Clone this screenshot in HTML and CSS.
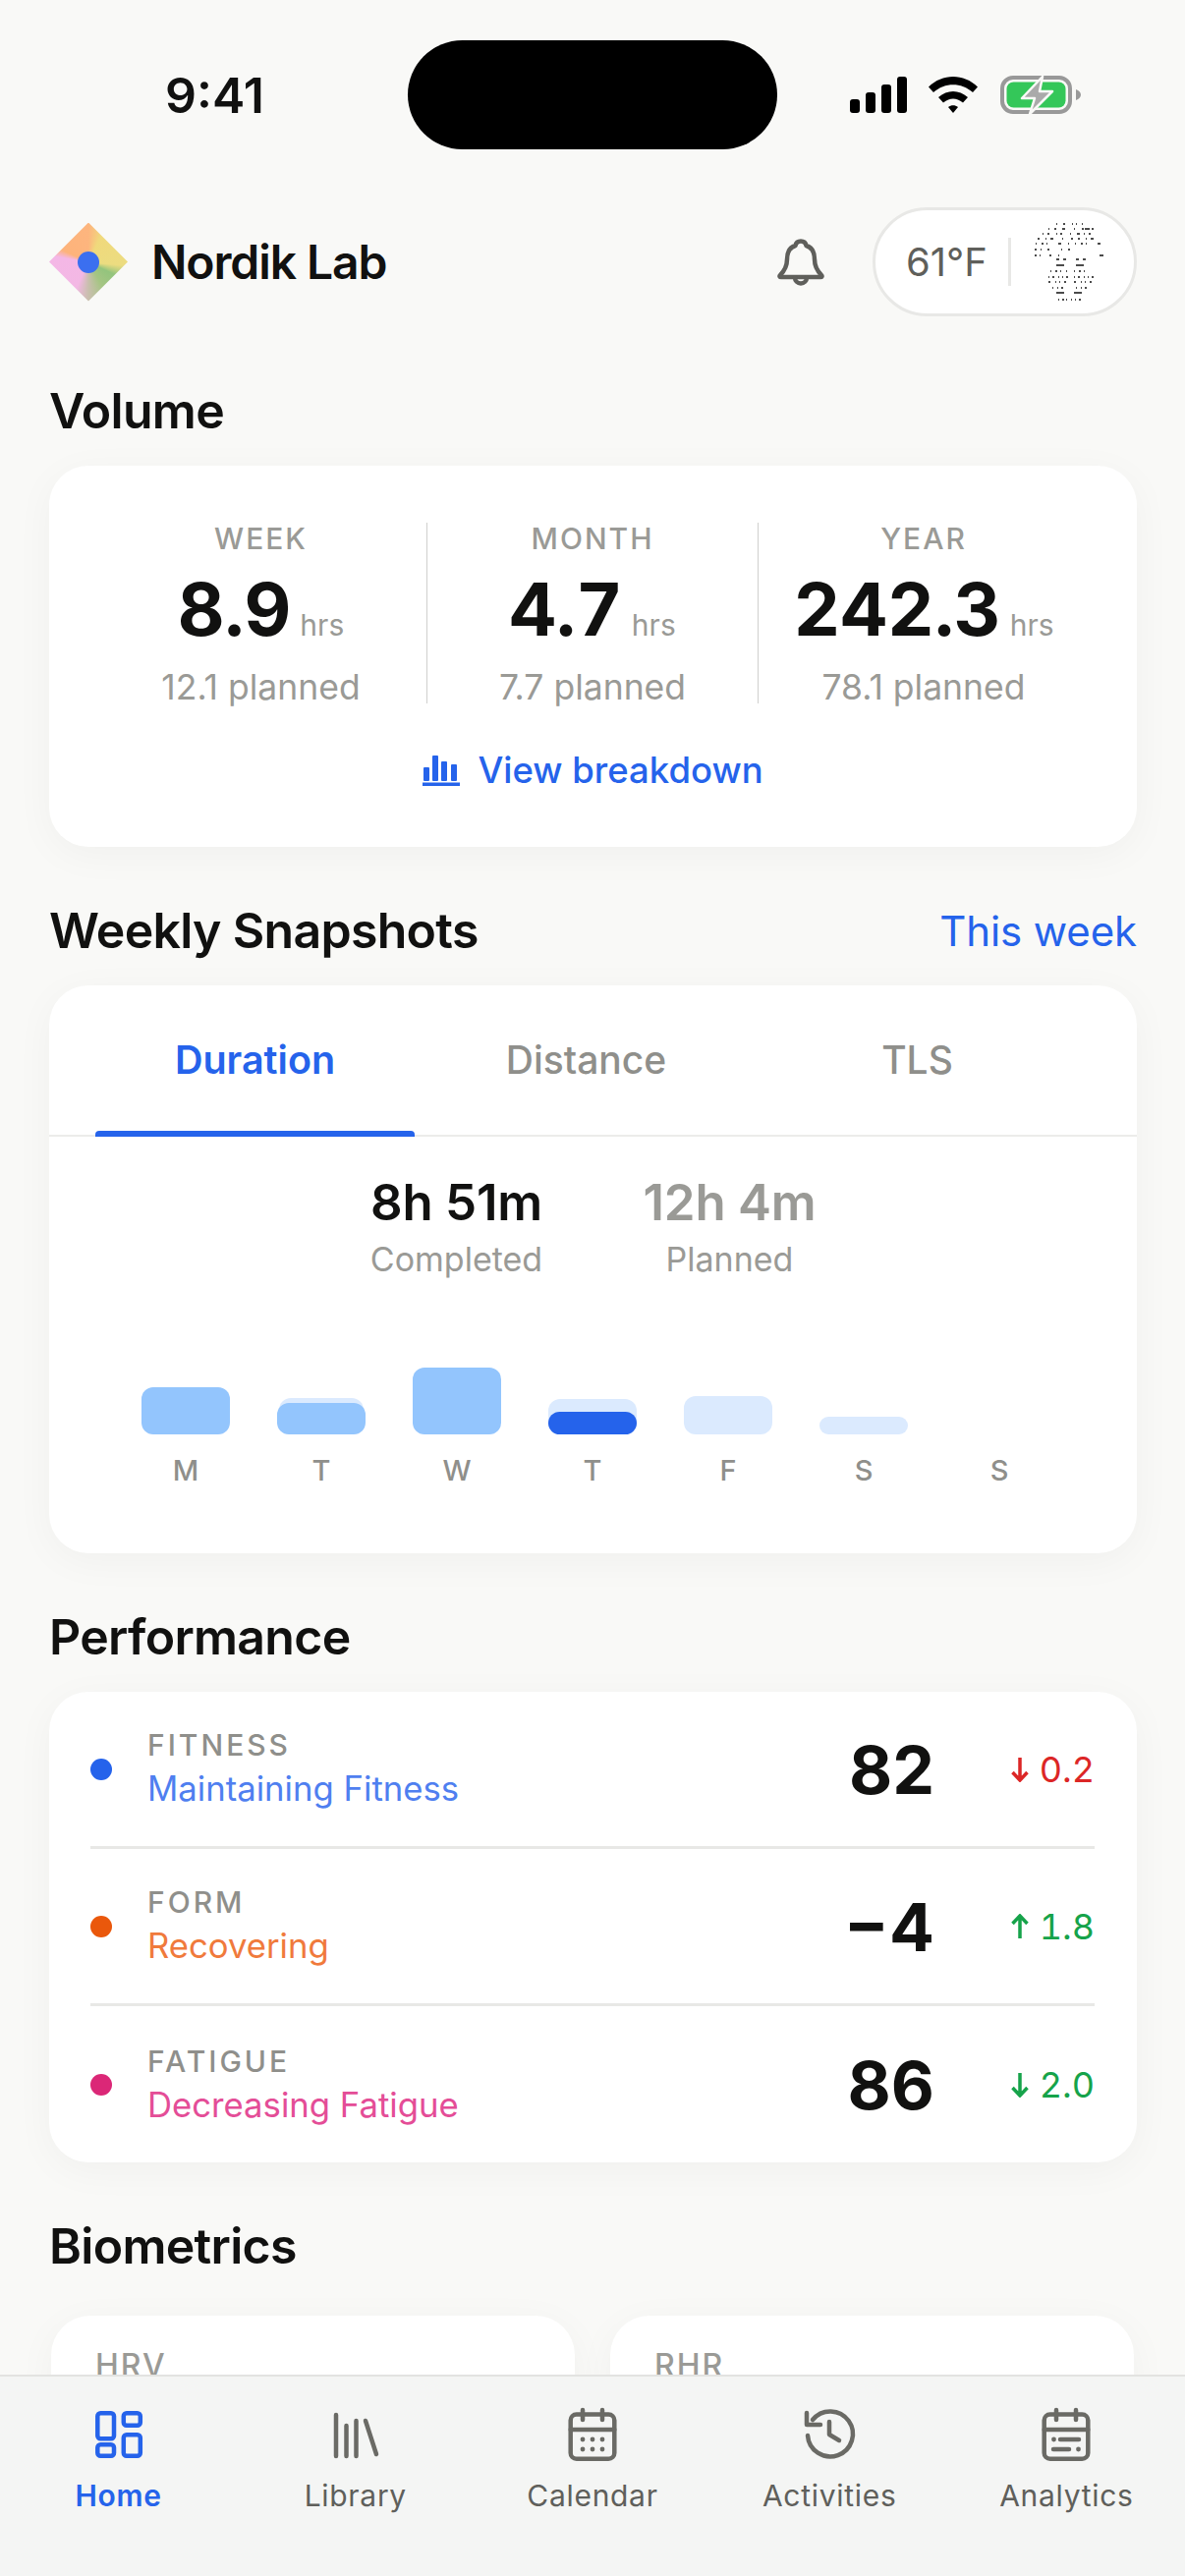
FILE: index.html
```html
<!DOCTYPE html>
<html>
<head>
<title>Nordik Lab</title>
<link rel="stylesheet" href="styles.css">
</head>
<body>
  <div class="status">
    <div class="time">9:41</div>
    <div class="island"></div>
    <div class="status-icons">
      <svg width="58" height="37" viewBox="0 0 58 37"><rect x="0" y="23" width="10" height="14" rx="3"/><rect x="16" y="16" width="10" height="21" rx="3"/><rect x="32" y="8" width="10" height="29" rx="3"/><rect x="48" y="0" width="10" height="37" rx="3"/></svg>
      <svg class="wifi" width="50" height="37" viewBox="0 0 50 37"><path d="M0 10.5C14-3.5 36-3.5 50 10.5L45 16C33.5 5.5 16.5 5.5 5 16Z"/><path d="M10 21C19 13 31 13 40 21L35 26.5C28 21 22 21 15 26.5Z"/><path d="M20 31C23 28.5 27 28.5 30 31L25 37Z"/></svg>
      <svg class="battery" width="82" height="40" viewBox="0 0 82 40"><rect x="2" y="2" width="69" height="35" rx="11" fill="none" stroke="#999" stroke-width="4"/><rect x="6.500" y="6.500" width="60" height="26" rx="7" fill="#34c759"/><path d="M77 14c3 1 5 3 5 5.500s-2 4.500-5 5.500z" fill="#999"/><path d="M43 1L22 23H35L30 39L53 16H40Z" fill="#aaa" stroke="#f9f9f7" stroke-width="2.500" stroke-linejoin="round"/></svg>
    </div>
  </div>

  <div class="page">
    <header class="topbar">
      <div class="logo"><span class="logo-dot"></span></div>
      <div class="brand">Nordik Lab</div>
      <svg class="bell" width="60" height="60" viewBox="0 0 60 60"><path d="M30 8.500C33 8.500 35 10.500 35.500 13C42 15 44 21 44 27C44 34 46 38 51 43C52 44 51.500 45 50 45L10 45C8.500 45 8 44 9 43C14 38 16 34 16 27C16 21 18 15 24.500 13C25 10.500 27 8.500 30 8.500Z"/><path d="M24 45.500a6 6 0 0 0 12 0"/></svg>
      <div class="weather">
        <span class="temp">61°F</span>
        <span class="weather-line"></span>
        <svg class="avatar" width="76" height="80" viewBox="0 0 76 80">
          <path d="M24 1H56" stroke-dasharray="1 6 2 7 1 3 1 5"/>
          <path d="M16 6H62" stroke-dasharray="1 5 2 6 3 9 1 7 2"/>
          <path d="M10 11H66" stroke-dasharray="1 4 2 7 1 3 2 8 1 6 3 4"/>
          <path d="M5 16H70" stroke-dasharray="2 6 1 4 3 9 1 8 2 5"/>
          <path d="M3 21H72" stroke-dasharray="1 5 2 3 1 11 3 7 1 6"/>
          <path d="M2 27H54" stroke-dasharray="2 4 1 6 2 12 1 6 2 16"/>
          <path d="M2 33H74" stroke-dasharray="2 3 1 9 2 7 1 41 4"/>
          <path d="M24 37H34M44 37H54" stroke-dasharray="3 4 3 2"/>
          <path d="M24 43H32M44 43H52"/>
          <path d="M18 49H36M42 49H58" stroke-dasharray="1 4 2 3 1 5"/>
          <path d="M16 55H36M42 55H62" stroke-dasharray="1 3 2 4 1 3"/>
          <path d="M16 60H36M42 60H62" stroke-dasharray="2 5 1 3 1 4"/>
          <path d="M20 66H36M44 66H60" stroke-dasharray="1 4 1 3 2 5"/>
          <path d="M24 71H32M42 71H50"/>
          <path d="M26 78H50" stroke-dasharray="1 3 2 2 1 4 1 3"/>
        </svg>
      </div>
    </header>

    <section class="section">
      <div class="section-head"><h2>Volume</h2></div>
      <div class="card volume">
        <div class="volume-cols">
          <div class="volume-col">
            <div class="col-label">WEEK</div>
            <div class="col-value"><b>8.9</b><span>hrs</span></div>
            <div class="col-plan">12.1 planned</div>
          </div>
          <div class="volume-col">
            <div class="col-label">MONTH</div>
            <div class="col-value"><b>4.7</b><span>hrs</span></div>
            <div class="col-plan">7.7 planned</div>
          </div>
          <div class="volume-col">
            <div class="col-label">YEAR</div>
            <div class="col-value"><b>242.3</b><span>hrs</span></div>
            <div class="col-plan">78.1 planned</div>
          </div>
        </div>
        <div class="breakdown">
          <svg width="38" height="32" viewBox="0 0 38 32"><rect x="1" y="13" width="6" height="14" rx="1"/><rect x="10" y="1" width="6" height="26" rx="1"/><rect x="19" y="7" width="6" height="20" rx="1"/><rect x="29" y="10" width="6" height="17" rx="1"/><rect x="0" y="28.500" width="38" height="3.500"/></svg>
          <span>View breakdown</span>
        </div>
      </div>
    </section>

    <section class="section">
      <div class="section-head"><h2>Weekly Snapshots</h2><a class="link">This week</a></div>
      <div class="card snapshots">
        <div class="tabs">
          <div class="tab active">Duration</div>
          <div class="tab">Distance</div>
          <div class="tab">TLS</div>
        </div>
        <div class="totals">
          <div class="total"><div class="total-num">8h 51m</div><div class="total-label">Completed</div></div>
          <div class="total muted"><div class="total-num">12h 4m</div><div class="total-label">Planned</div></div>
        </div>
        <div class="chart">
          <div class="day">
            <div class="bars"><div class="bar done" style="height:48px"></div></div>
            <div class="day-label">M</div>
          </div>
          <div class="day">
            <div class="bars"><div class="bar plan narrow" style="height:37px"></div><div class="bar done" style="height:32px"></div></div>
            <div class="day-label">T</div>
          </div>
          <div class="day">
            <div class="bars"><div class="bar done" style="height:68px"></div></div>
            <div class="day-label">W</div>
          </div>
          <div class="day">
            <div class="bars"><div class="bar plan" style="height:36px"></div><div class="bar today" style="height:23px"></div></div>
            <div class="day-label">T</div>
          </div>
          <div class="day">
            <div class="bars"><div class="bar plan" style="height:39px"></div></div>
            <div class="day-label">F</div>
          </div>
          <div class="day">
            <div class="bars"><div class="bar plan" style="height:18px"></div></div>
            <div class="day-label">S</div>
          </div>
          <div class="day">
            <div class="bars"></div>
            <div class="day-label">S</div>
          </div>
        </div>
      </div>
    </section>

    <section class="section">
      <div class="section-head"><h2>Performance</h2></div>
      <div class="card perf">
        <div class="perf-row">
          <span class="dot blue"></span>
          <div class="perf-text"><div class="perf-label">FITNESS</div><div class="perf-sub blue-text">Maintaining Fitness</div></div>
          <div class="perf-num">82</div>
          <div class="delta red"><svg width="20" height="26" viewBox="0 0 20 26"><path d="M10 1V24M2.500 16L10 24L17.500 16"/></svg><span>0.2</span></div>
        </div>
        <div class="perf-row">
          <span class="dot orange"></span>
          <div class="perf-text"><div class="perf-label">FORM</div><div class="perf-sub orange-text">Recovering</div></div>
          <div class="perf-num">−4</div>
          <div class="delta green"><svg width="20" height="26" viewBox="0 0 20 26"><path d="M10 25V2M2.500 10L10 2L17.500 10"/></svg><span>1.8</span></div>
        </div>
        <div class="perf-row">
          <span class="dot pink"></span>
          <div class="perf-text"><div class="perf-label">FATIGUE</div><div class="perf-sub pink-text">Decreasing Fatigue</div></div>
          <div class="perf-num">86</div>
          <div class="delta green"><svg width="20" height="26" viewBox="0 0 20 26"><path d="M10 1V24M2.500 16L10 24L17.500 16"/></svg><span>2.0</span></div>
        </div>
      </div>
    </section>

    <section class="section">
      <div class="section-head"><h2>Biometrics</h2></div>
      <div class="bio">
        <div class="card bio-card"><div class="bio-label">HRV</div></div>
        <div class="card bio-card"><div class="bio-label">RHR</div></div>
      </div>
    </section>
  </div>

  <nav class="nav">
    <div class="nav-item active">
      <svg width="60" height="60" viewBox="0 0 60 60"><rect x="8.300" y="8.300" width="16.700" height="26" rx="3"/><rect x="34.800" y="8.300" width="17" height="12.500" rx="3"/><rect x="8.300" y="40.300" width="16.700" height="11.500" rx="3"/><rect x="34.800" y="30.300" width="17" height="21.500" rx="3"/></svg>
      <span>Home</span>
    </div>
    <div class="nav-item">
      <svg width="60" height="60" viewBox="0 0 60 60"><path d="M10 10V52M20.500 21V52M30.500 16V52M40 16L51 50"/></svg>
      <span>Library</span>
    </div>
    <div class="nav-item">
      <svg width="60" height="60" viewBox="0 0 60 60"><rect x="7.700" y="9.500" width="44.600" height="45.200" rx="6"/><path d="M7.700 25H52.300M20 5V15M40 5V15"/><g class="dots"><circle cx="20" cy="35" r="2.400"/><circle cx="30" cy="35" r="2.400"/><circle cx="40" cy="35" r="2.400"/><circle cx="20" cy="45" r="2.400"/><circle cx="30" cy="45" r="2.400"/><circle cx="40" cy="45" r="2.400"/></g></svg>
      <span>Calendar</span>
    </div>
    <div class="nav-item">
      <svg width="60" height="60" viewBox="0 0 60 60"><path d="M8 31A23 23 0 1 0 13 15"/><path d="M7 8V20H21M30 17V30L40 36"/></svg>
      <span>Activities</span>
    </div>
    <div class="nav-item">
      <svg width="60" height="60" viewBox="0 0 60 60"><rect x="7.700" y="9.500" width="44.600" height="45.200" rx="6"/><path d="M7.700 25H52.300M20 5V15M40 5V15M24 35H43M17 45H33"/><g class="dots"><circle cx="17.500" cy="35" r="2.400"/><circle cx="42.500" cy="45" r="2.400"/></g></svg>
      <span>Analytics</span>
    </div>
  </nav>
</body>
</html>
```

FILE: styles.css
```css
* {
  box-sizing: border-box;
}

html, body {
  margin: 0;
  height: 2622px;
  overflow: hidden;
}

body {
  position: relative;
  font-family: Inter, "Noto Sans", sans-serif;
  background-color: #f9f9f7;
  color: #111110;
}

/* status bar */
.status {
  display: flex;
  align-items: center;
  height: 111px;
  margin-top: 41px;
}

.time {
  width: 246px;
  margin-left: 168px;
  font-size: 50px;
  font-weight: 600;
  line-height: 60px;
}

.island {
  width: 376px;
  height: 111px;
  margin-left: 1px;
  border-radius: 56px;
  background-color: #000;
}

.status-icons {
  display: flex;
  align-items: center;
  margin-left: 74px;
}

.wifi {
  margin-left: 22px;
}

.battery {
  margin-left: 23px;
}

.page {
  padding: 0 49px 0 50px;
}

/* header */
.topbar {
  display: flex;
  align-items: center;
  height: 111px;
  margin-top: 59px;
}

.logo {
  display: flex;
  align-items: center;
  justify-content: center;
  width: 80px;
  height: 80px;
  background: conic-gradient(from 0deg at 50% 50%, #fdb57e 0deg, #f0d97c 25deg, #ecdc80 95deg, #93c47d 115deg, #a5c583 150deg, #c9bfae 180deg, #f3b8e4 205deg, #f4b7e6 280deg, #fdb37b 295deg, #fdb57e 360deg);
  clip-path: polygon(50% 0, 100% 50%, 50% 100%, 0 50%);
}

.logo-dot {
  width: 22px;
  height: 22px;
  border-radius: 50%;
  background-color: #3b6ff0;
}

.brand {
  margin-left: 24px;
  font-size: 48px;
  font-weight: 600;
  letter-spacing: -1.100px;
}

.bell {
  margin-left: auto;
  margin-right: 43px;
  fill: none;
  stroke: #5f5f5b;
  stroke-width: 4.5;
  stroke-linejoin: round;
  stroke-linecap: round;
}

.weather {
  display: flex;
  align-items: center;
  width: 269px;
  height: 111px;
  padding-left: 31px;
  border: 3px solid #e8e8e6;
  border-radius: 56px;
  background-color: #fff;
}

.temp {
  width: 81px;
  font-size: 40px;
  color: #5f5f5b;
  white-space: nowrap;
}

.weather-line {
  width: 3px;
  height: 49px;
  margin-left: 23px;
  background-color: #e8e8e6;
}

.avatar {
  margin-left: 22px;
  fill: none;
  stroke: #111;
  stroke-width: 1.500;
}

/* sections */
.section {
  margin-top: 55px;
}

.topbar + .section {
  margin-top: 66px;
}

.section-head {
  display: flex;
  align-items: center;
  justify-content: space-between;
  height: 60px;
  margin-bottom: 26px;
}

h2 {
  margin: 0;
  font-size: 50px;
  font-weight: 600;
  letter-spacing: -0.700px;
}

.link {
  font-size: 42px;
  letter-spacing: -0.100px;
  color: #2563eb;
}

.card {
  border-radius: 40px;
  background-color: #fff;
  box-shadow: 0 8px 40px rgba(0, 0, 0, 0.04);
}

/* volume */
.volume {
  height: 388px;
  padding: 58px 47px 0;
}

.volume-cols {
  display: grid;
  grid-template-columns: repeat(3, 337px);
}

.volume-col {
  height: 184px;
  text-align: center;
  border-left: 1.500px solid #d0d0ce;
}

.volume-col:first-child {
  border-left: 0;
}

.col-label {
  margin-top: -2px;
  font-size: 30px;
  font-weight: 500;
  letter-spacing: 2px;
  line-height: 36px;
  color: #9a9a96;
}

.col-value {
  margin-top: 10px;
  line-height: 88px;
  white-space: nowrap;
  font-variant-numeric: tabular-nums;
}

.col-value b {
  font-size: 74px;
  font-weight: 700;
}

.col-value span {
  margin-left: 9px;
  font-size: 30px;
  color: #9a9a96;
}

.col-plan {
  margin-top: -7px;
  font-size: 35.500px;
  line-height: 44px;
  color: #9a9a96;
}

.breakdown {
  display: flex;
  align-items: center;
  justify-content: center;
  gap: 18px;
  margin-top: 46px;
  font-size: 36.500px;
  font-weight: 500;
  color: #2563eb;
}

.breakdown svg {
  fill: #2563eb;
}

/* snapshots */
.snapshots {
  height: 578px;
}

.tabs {
  display: grid;
  grid-template-columns: repeat(3, 337px);
  height: 154px;
  padding-left: 41px;
  border-bottom: 2px solid #ececea;
}

.tab {
  position: relative;
  padding-top: 51px;
  text-align: center;
  font-size: 39px;
  font-weight: 500;
  line-height: 50px;
  color: #8f8f8b;
}

.tab.active {
  font-size: 39.500px;
  font-weight: 600;
  color: #2563eb;
}

.tab.active::after {
  content: "";
  position: absolute;
  left: 6px;
  right: 6px;
  bottom: -2px;
  height: 6px;
  border-radius: 4px 4px 0 0;
  background-color: #2563eb;
}

.totals {
  display: grid;
  grid-template-columns: 180px 180px;
  justify-content: center;
  gap: 98px;
  margin-top: 37px;
  text-align: center;
}

.total-num {
  font-size: 51px;
  font-weight: 600;
  letter-spacing: -0.200px;
  line-height: 60px;
  white-space: nowrap;
}

.total-label {
  margin-top: 6px;
  font-size: 34px;
  line-height: 44px;
  color: #9a9a96;
}

.muted .total-num {
  color: #9a9a96;
}

.chart {
  display: flex;
  padding-left: 70px;
  margin-top: 88px;
}

.day {
  width: 138px;
  display: flex;
  flex-direction: column;
  align-items: center;
}

.bars {
  position: relative;
  width: 90px;
  height: 68px;
}

.bar {
  position: absolute;
  left: 0;
  right: 0;
  bottom: 0;
  border-radius: 12px;
}

.bar.narrow {
  left: 2px;
  right: 2px;
}

.bar.done {
  background-color: #93c5fd;
}

.bar.plan {
  background-color: #dbeafe;
}

.bar.today {
  background-color: #2563eb;
}

.day-label {
  margin-top: 19px;
  font-size: 29px;
  font-weight: 500;
  line-height: 36px;
  color: #8f8f8b;
}

/* performance */
.perf {
  height: 479px;
  padding: 0 43px 0 42px;
}

.perf-row {
  display: flex;
  align-items: center;
  height: 160px;
  border-bottom: 3px solid #e8e8e6;
}

.perf-row:last-child {
  border-bottom: 0;
}

.dot {
  width: 22px;
  height: 22px;
  border-radius: 50%;
}

.dot.blue {
  background-color: #2563eb;
}

.dot.orange {
  background-color: #ea580c;
}

.dot.pink {
  background-color: #db2777;
}

.perf-text {
  flex: 1;
  margin-left: 36px;
  padding-bottom: 3px;
}

.perf-label {
  font-size: 30px;
  font-weight: 500;
  letter-spacing: 3px;
  line-height: 40px;
  color: #8f8f8b;
}

.perf-sub {
  margin-top: 2px;
  font-size: 34.700px;
  line-height: 44px;
}

.blue-text {
  color: #4f7ff0;
}

.orange-text {
  color: #f07a3c;
}

.pink-text {
  color: #e44d97;
}

.perf-num {
  margin-right: -1px;
  font-size: 68px;
  font-weight: 700;
  text-align: right;
}

.delta {
  display: flex;
  align-items: center;
  justify-content: flex-end;
  width: 164px;
  gap: 10px;
  font-size: 36px;
  font-variant-numeric: tabular-nums;
}

.delta svg {
  fill: none;
  stroke: currentColor;
  stroke-width: 3.500;
}

.red {
  color: #dc2626;
}

.green {
  color: #16a34a;
}

/* biometrics */
.bio {
  display: grid;
  grid-template-columns: 533px 533px;
  gap: 36px;
  margin: 41px 3px 0 2px;
}

.bio-card {
  height: 320px;
  padding: 33px 45px;
}

.bio-label {
  font-size: 32px;
  font-weight: 500;
  letter-spacing: 2px;
  line-height: 36px;
  color: #9a9a96;
}

/* bottom tabs */
.nav {
  position: absolute;
  left: 0;
  right: 0;
  bottom: 0;
  display: grid;
  grid-template-columns: repeat(5, 1fr);
  height: 205px;
  padding-top: 29px;
  border-top: 2px solid #e3e3e1;
  background-color: #f4f5f4;
}

.nav-item {
  display: flex;
  flex-direction: column;
  align-items: center;
  font-size: 30px;
  letter-spacing: 0.700px;
  line-height: 40px;
  color: #5f5f5b;
}

.nav-item svg {
  margin-bottom: 12px;
  fill: none;
  stroke: #6a6a65;
  stroke-width: 4.500;
  stroke-linecap: round;
  stroke-linejoin: round;
}

.nav-item .dots {
  fill: #6a6a65;
  stroke: none;
}

.nav-item.active {
  font-weight: 600;
  color: #2563eb;
}

.nav-item.active svg {
  stroke: #2563eb;
}
```
